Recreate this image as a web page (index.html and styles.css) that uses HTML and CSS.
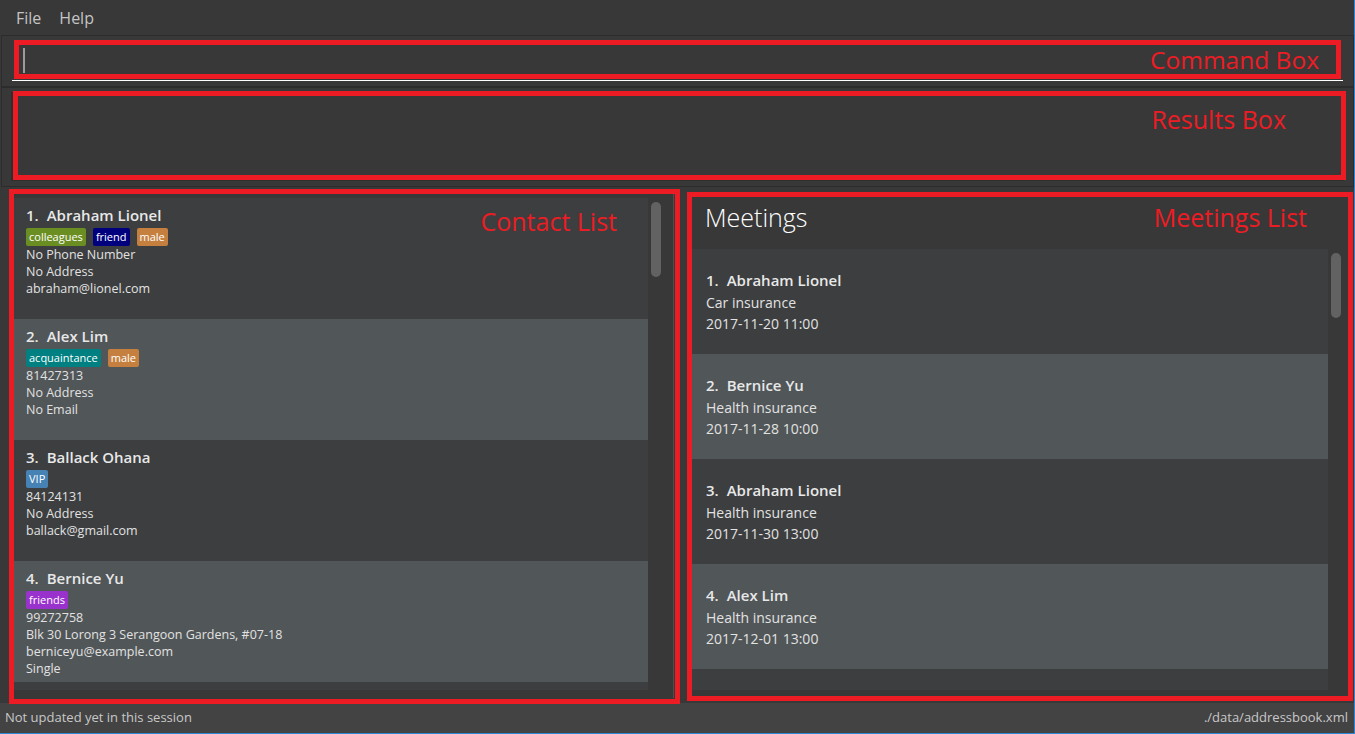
FILE: index.html
```html
<!DOCTYPE html>
<html lang="en">
<head>
<meta charset="utf-8">
<title>Address Book</title>
<link rel="stylesheet" href="styles.css">
</head>
<body>
<div class="window">
  <nav class="menubar">
    <span class="menu-item">File</span>
    <span class="menu-item">Help</span>
  </nav>

  <section class="command-pane">
    <div class="annot cmd-box">
      <span class="caret"></span>
      <span class="annot-label cmd-label">Command Box</span>
    </div>
    <div class="underline"></div>
  </section>

  <section class="result-pane">
    <div class="annot result-box">
      <span class="annot-label">Results Box</span>
    </div>
  </section>

  <main class="lists">
    <div class="annot contact-annot">
      <div class="list-row contact-row">
        <div class="viewport contact-viewport">
          <article class="card contact-card even">
            <div class="card-name"><span class="idx">1.</span>Abraham Lionel</div>
            <div class="tags">
              <span class="tag t-colleagues">colleagues</span>
              <span class="tag t-friend">friend</span>
              <span class="tag t-male">male</span>
            </div>
            <div class="detail">No Phone Number</div>
            <div class="detail">No Address</div>
            <div class="detail">abraham@lionel.com</div>
          </article>
          <article class="card contact-card odd">
            <div class="card-name"><span class="idx">2.</span>Alex Lim</div>
            <div class="tags">
              <span class="tag t-acquaintance">acquaintance</span>
              <span class="tag t-male">male</span>
            </div>
            <div class="detail">81427313</div>
            <div class="detail">No Address</div>
            <div class="detail">No Email</div>
          </article>
          <article class="card contact-card even">
            <div class="card-name"><span class="idx">3.</span>Ballack Ohana</div>
            <div class="tags">
              <span class="tag t-vip">VIP</span>
            </div>
            <div class="detail">84124131</div>
            <div class="detail">No Address</div>
            <div class="detail">ballack@gmail.com</div>
          </article>
          <article class="card contact-card odd">
            <div class="card-name"><span class="idx">4.</span>Bernice Yu</div>
            <div class="tags">
              <span class="tag t-friends">friends</span>
            </div>
            <div class="detail">99272758</div>
            <div class="detail">Blk 30 Lorong 3 Serangoon Gardens, #07-18</div>
            <div class="detail">berniceyu@example.com</div>
            <div class="detail">Single</div>
          </article>
        </div>
        <div class="track contact-track"><div class="thumb contact-thumb"></div></div>
        <div class="divider"></div>
      </div>
      <span class="annot-label contact-label">Contact List</span>
    </div>

    <div class="annot meeting-annot">
      <div class="meeting-head">
        <span class="meeting-title">Meetings</span>
        <span class="annot-label">Meetings List</span>
      </div>
      <div class="list-row meeting-row">
        <div class="viewport meeting-viewport">
          <article class="card meeting-card even">
            <div class="card-name"><span class="idx">1.</span>Abraham Lionel</div>
            <div class="mdetail">Car insurance</div>
            <div class="mdetail">2017-11-20 11:00</div>
          </article>
          <article class="card meeting-card odd">
            <div class="card-name"><span class="idx">2.</span>Bernice Yu</div>
            <div class="mdetail">Health insurance</div>
            <div class="mdetail">2017-11-28 10:00</div>
          </article>
          <article class="card meeting-card even">
            <div class="card-name"><span class="idx">3.</span>Abraham Lionel</div>
            <div class="mdetail">Health insurance</div>
            <div class="mdetail">2017-11-30 13:00</div>
          </article>
          <article class="card meeting-card odd">
            <div class="card-name"><span class="idx">4.</span>Alex Lim</div>
            <div class="mdetail">Health insurance</div>
            <div class="mdetail">2017-12-01 13:00</div>
          </article>
        </div>
        <div class="track meeting-track"><div class="thumb meeting-thumb"></div></div>
      </div>
    </div>
  </main>

  <footer class="status">
    <span>Not updated yet in this session</span>
    <span>./data/addressbook.xml</span>
  </footer>
</div>
</body>
</html>
```

FILE: styles.css
```css
* { box-sizing: border-box; }
html, body { margin: 0; padding: 0; }
body {
  background: #383838;
  font-family: "Open Sans", "Noto Sans", sans-serif;
  color: #e6e6e6;
}
.window {
  width: 1355px;
  height: 734px;
  display: flex;
  flex-direction: column;
  background: #383838;
  border-right: 1px solid #2b86d5;
  border-bottom: 1px solid #2b86d5;
  overflow: hidden;
}

/* menu */
.menubar {
  height: 35px;
  flex: none;
  display: flex;
  align-items: center;
  gap: 18px;
  padding-left: 16px;
  font-size: 16px;
  color: #c4c4c4;
}

/* annotation boxes */
.annot {
  border: 5px solid #ed1c24;
  flex: none;
}
.annot-label {
  color: #ed1c24;
  font-size: 25px;
  line-height: 25px;
  white-space: nowrap;
}

/* command pane */
.command-pane {
  flex: none;
  height: 52px;
  margin-left: 1px;
  width: 1353px;
  border: 1px solid #2c2c2c;
  padding-top: 4px;
}
.cmd-box {
  margin-left: 12px;
  width: 1327px;
  height: 39px;
  display: flex;
  align-items: center;
  justify-content: space-between;
  padding: 0 17px 0 4px;
}
.caret {
  width: 2px;
  height: 25px;
  background: #9b9b9b;
  align-self: flex-start;
  margin-top: 3px;
}
.cmd-label { margin-bottom: 1px; font-size: 24.5px; }
.underline {
  margin-top: 1px;
  margin-left: 10px;
  width: 1331px;
  height: 1px;
  background: #ffffff;
}

/* results pane */
.result-pane {
  flex: none;
  height: 100px;
  margin-left: 1px;
  width: 1353px;
  border: 1px solid #2c2c2c;
  padding-top: 3px;
}
.result-box {
  margin-left: 11px;
  width: 1333px;
  height: 89px;
  display: flex;
  justify-content: flex-end;
  padding: 11px 55px 0 0;
  box-shadow: -2px 1px 0 #2e2e2e;
}

/* lists */
.lists {
  flex: none;
  height: 516px;
  display: flex;
  align-items: flex-start;
}
.contact-annot {
  position: relative;
  margin: 2px 0 0 9px;
  width: 671px;
  height: 515px;
  padding-top: 4px;
}
.contact-label {
  position: absolute;
  top: 15px;
  right: 58px;
}
.list-row {
  display: flex;
}
.viewport {
  overflow: hidden;
  background: #3c3e3f;
}
.contact-viewport {
  width: 634px;
  height: 492px;
}
.track { flex: none; }
.contact-track {
  width: 25px;
  height: 492px;
  padding: 4px 0 0 3px;
}
.thumb {
  width: 10px;
  border-radius: 5px;
  background: #626262;
}
.contact-thumb { height: 75px; }
.divider {
  width: 1px;
  height: 504px;
  margin-top: -4px;
  background: #4e4e4e;
}

.card { overflow: hidden; }
.card.even { background: #3c3e3f; }
.card.odd { background: #515658; }
.card-name {
  font-size: 15px;
  font-weight: 600;
  line-height: 22px;
  color: #e8e8e8;
  white-space: nowrap;
}
.idx { margin-right: 8px; }

.contact-card {
  height: 121px;
  padding: 6px 12px 0 12px;
}
.tags {
  display: flex;
  gap: 7px;
  margin-top: 2px;
  height: 18px;
}
.tag {
  font-size: 11px;
  line-height: 18px;
  height: 18px;
  padding: 0 3px;
  border-radius: 2px;
  color: #ffffff;
}
.t-colleagues { background: #6b8e23; }
.t-friend { background: #00007f; }
.t-male { background: #c5803f; }
.t-acquaintance { background: #008080; }
.t-vip { background: #4682b4; }
.t-friends { background: #9932cc; }
.detail {
  font-size: 12.5px;
  line-height: 17px;
  color: #e2e2e2;
  white-space: nowrap;
}

/* meetings */
.meeting-annot {
  margin: 5px 0 0 7px;
  width: 666px;
  height: 509px;
}
.meeting-head {
  height: 52px;
  display: flex;
  justify-content: space-between;
  align-items: baseline;
  padding: 7px 41px 0 13px;
}
.meeting-title {
  font-size: 25px;
  font-weight: 300;
  line-height: 26px;
  color: #ffffff;
}
.meeting-viewport {
  width: 636px;
  height: 441px;
}
.meeting-track {
  width: 20px;
  height: 441px;
  padding: 4px 0 0 3px;
}
.meeting-thumb { height: 65px; }
.meeting-card {
  height: 105px;
  padding: 20px 14px 0 14px;
}
.mdetail {
  font-size: 14px;
  line-height: 21px;
  color: #e2e2e2;
}
.meeting-card .card-name + .mdetail { margin-top: 1px; }

/* status */
.status {
  flex: none;
  height: 30px;
  background: #434343;
  display: flex;
  justify-content: space-between;
  align-items: flex-start;
  padding: 5px 6px 0 5px;
  font-size: 13px;
  color: #c8c8c8;
}
```
